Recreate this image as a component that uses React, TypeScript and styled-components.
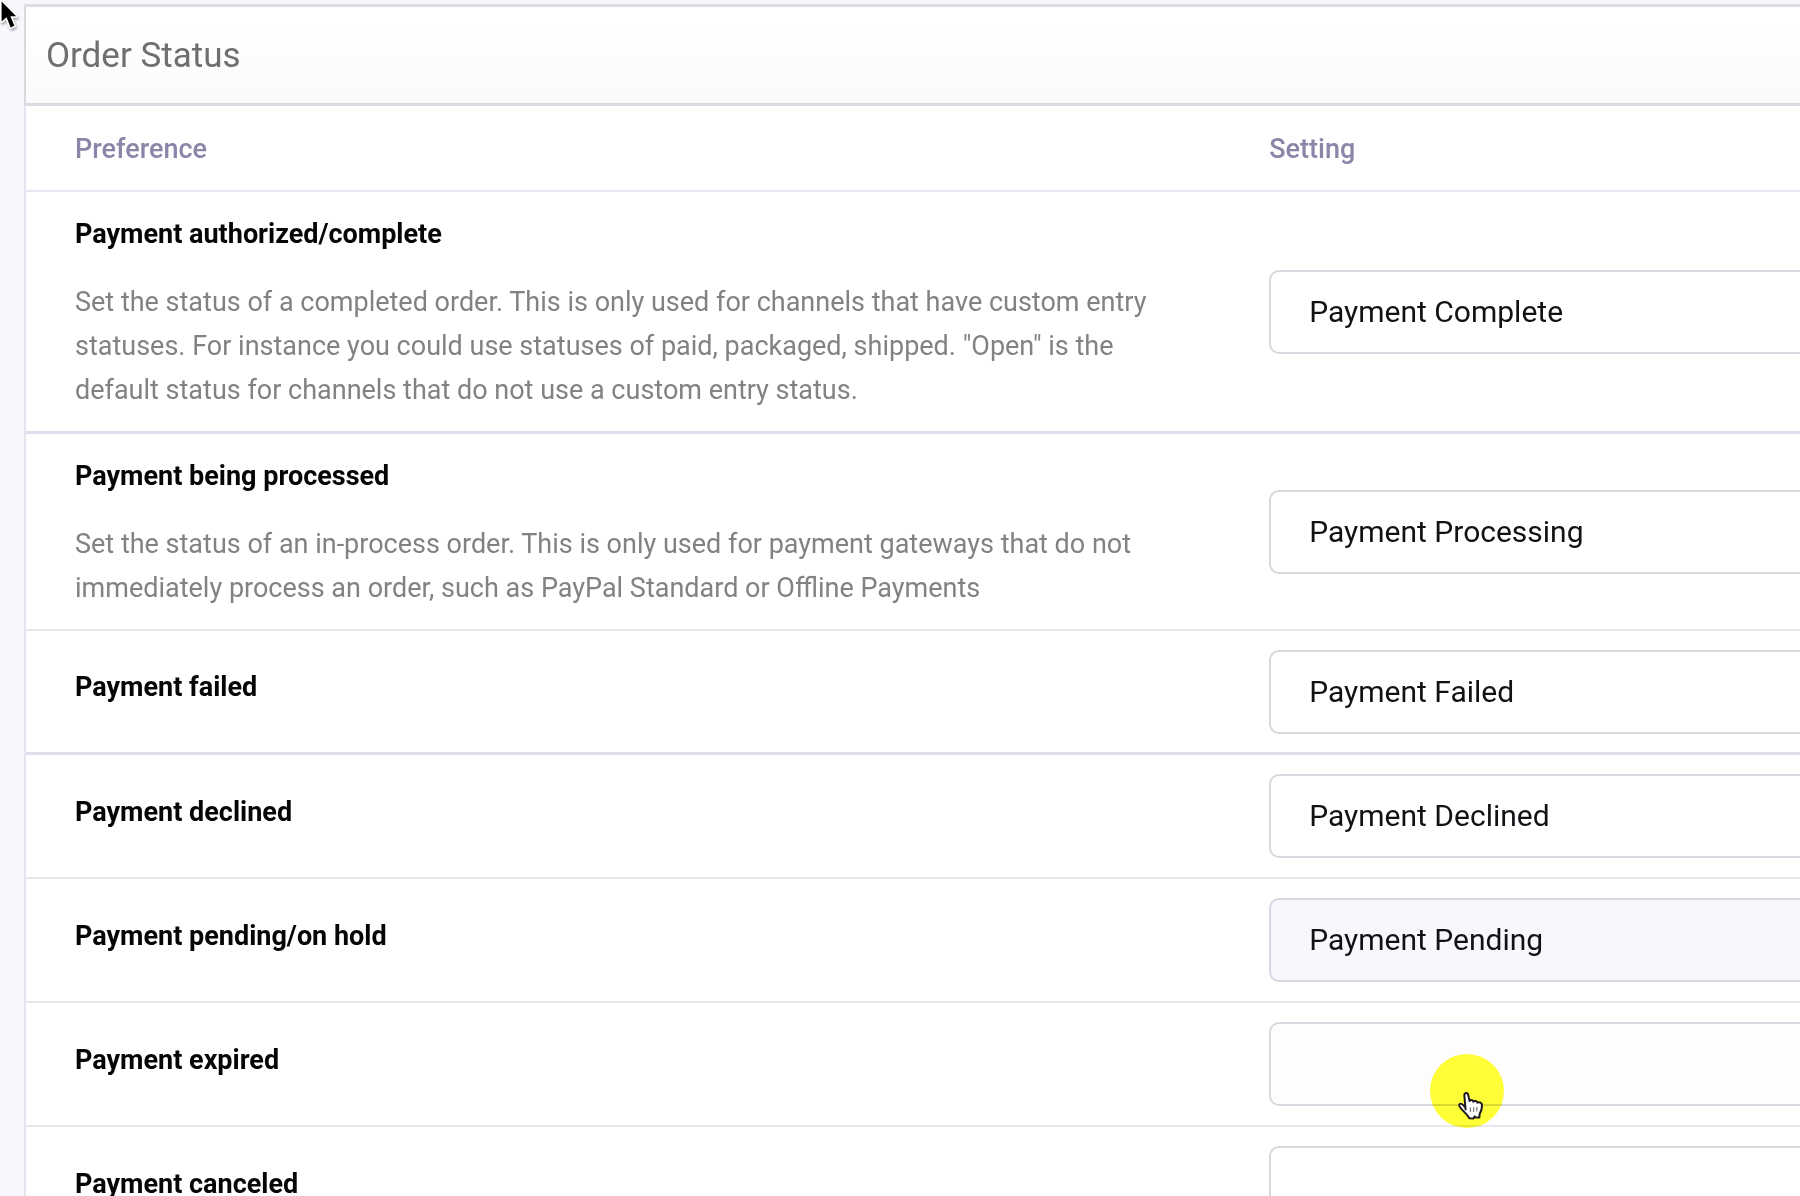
import React, { useState } from "react";
import styled, { createGlobalStyle } from "styled-components";

const GlobalStyle = createGlobalStyle`
  *, *::before, *::after { box-sizing: border-box; }
  body {
    margin: 0;
    background: #f8f7fe;
    color: #060609;
    font-family: Roboto, "Liberation Sans", sans-serif;
  }
`;

const Page = styled.main`
  position: relative;
  height: 100vh;
  overflow: hidden;
  padding: 4px 0 0 24px;
`;

const Panel = styled.section`
  margin-right: -94px;
  border: 2px solid #e6e4ee;
  border-top: 3px solid #dddce2;
  background: #fff;
`;

const PanelHeader = styled.header`
  display: flex;
  align-items: center;
  padding: 25px 20px 23px;
  margin-left: -2px;
  border-left: 2px solid #d9d8de;
  border-bottom: 3px solid #dcdbe3;
  background: linear-gradient(#fff 20%, #fafafa);
`;

const Title = styled.h1`
  margin: 0;
  font-size: 35px;
  font-weight: 400;
  line-height: 48px;
  color: #6f6f70;
`;

const Table = styled.table`
  width: 100%;
  table-layout: fixed;
  border-collapse: separate;
  border-spacing: 0;
`;

const PreferenceColumn = styled.col`
  width: 64%;
`;

const HeadCell = styled.th`
  padding: 21px 49px 19px;
  border-bottom: 2px solid #e8e6f0;
  text-align: left;
  font-size: 27px;
  font-weight: 500;
  line-height: 44px;
  color: #8b86a8;
`;

const Row = styled.tr<{ $strong?: boolean }>`
  > * {
    height: 124px;
    border-bottom: ${(p) => (p.$strong ? "3px solid #e0deec" : "2px solid #e8e7f0")};
    text-align: left;
    vertical-align: middle;
  }
`;

const PreferenceCell = styled.th`
  padding: 20px 49px 19px;
  font-weight: 400;
`;

const Name = styled.label`
  display: block;
  margin-bottom: 10px;
  font-size: 27px;
  font-weight: 700;
  line-height: 44px;
`;

const Description = styled.p`
  margin: 24px 0 0;
  font-size: 27px;
  line-height: 44px;
  color: #828284;
`;

const SettingCell = styled.td`
  padding: 18px 49px;
`;

const Select = styled.select<{ $tint?: string }>`
  display: block;
  appearance: none;
  width: 100%;
  height: 84px;
  padding: 0 38px;
  border: 2px solid #d9d8e0;
  border-radius: 10px;
  background: ${(p) => p.$tint ?? "#fff"};
  font: 400 30px/36px Roboto, "Liberation Sans", sans-serif;
  color: #111116;
  outline: none;
`;

const ClickHighlight = styled.div`
  position: absolute;
  left: 1430px;
  top: 1054px;
  width: 74px;
  height: 74px;
  border-radius: 50%;
  background: #ffff38;
  mix-blend-mode: multiply;
  pointer-events: none;
`;

const HandPointer = styled.svg`
  position: absolute;
  left: 1457px;
  top: 1091px;
  pointer-events: none;
`;

const ArrowPointer = styled.svg`
  position: absolute;
  left: 0;
  top: 0;
  pointer-events: none;
  filter: drop-shadow(1px 2px 1px rgba(0, 0, 0, 0.3));
`;

type Preference = {
  id: string;
  name: string;
  description?: string;
  value: string;
  strong?: boolean;
  tint?: string;
};

const statuses = [
  "",
  "Payment Complete",
  "Payment Processing",
  "Payment Failed",
  "Payment Declined",
  "Payment Pending",
];

const preferences: Preference[] = [
  {
    id: "complete",
    name: "Payment authorized/complete",
    description:
      'Set the status of a completed order. This is only used for channels that have custom entry statuses. For instance you could use statuses of paid, packaged, shipped. "Open" is the default status for channels that do not use a custom entry status.',
    value: "Payment Complete",
    strong: true,
  },
  {
    id: "processing",
    name: "Payment being processed",
    description:
      "Set the status of an in-process order. This is only used for payment gateways that do not immediately process an order, such as PayPal Standard or Offline Payments",
    value: "Payment Processing",
  },
  { id: "failed", name: "Payment failed", value: "Payment Failed", strong: true },
  { id: "declined", name: "Payment declined", value: "Payment Declined" },
  { id: "pending", name: "Payment pending/on hold", value: "Payment Pending", tint: "#f8f7fd" },
  { id: "expired", name: "Payment expired", value: "", tint: "#fefdfe" },
  { id: "canceled", name: "Payment canceled", value: "" },
];

function PreferenceRow({ item }: { item: Preference }) {
  const [value, setValue] = useState(item.value);
  return (
    <Row $strong={item.strong}>
      <PreferenceCell scope="row">
        <Name htmlFor={item.id}>{item.name}</Name>
        {item.description && <Description>{item.description}</Description>}
      </PreferenceCell>
      <SettingCell>
        <Select
          id={item.id}
          $tint={item.tint}
          value={value}
          onChange={(e) => setValue(e.target.value)}
        >
          {statuses.map((s) => (
            <option key={s} value={s}>
              {s}
            </option>
          ))}
        </Select>
      </SettingCell>
    </Row>
  );
}

export default function App() {
  return (
    <>
      <GlobalStyle />
      <Page>
        <Panel>
          <PanelHeader>
            <Title>Order Status</Title>
          </PanelHeader>
          <Table>
            <colgroup>
              <PreferenceColumn />
              <col />
            </colgroup>
            <thead>
              <tr>
                <HeadCell scope="col">Preference</HeadCell>
                <HeadCell scope="col">Setting</HeadCell>
              </tr>
            </thead>
            <tbody>
              {preferences.map((item) => (
                <PreferenceRow key={item.id} item={item} />
              ))}
            </tbody>
          </Table>
        </Panel>
        <ClickHighlight />
        <HandPointer width="28" height="30" viewBox="0 0 28 30" aria-hidden="true">
          <path
            d="M8.6 18.5 L7.4 5.2 C7 1.2 10.8 1 11.4 4.6 L12.6 10 C13.6 8.6 15.8 8.8 16.4 10.6 C17.6 9.4 19.8 9.8 20.4 11.6 C22.4 10.6 25 11.8 25 14.2 C25.2 18 24 20.6 22.6 23.2 L22.4 26.4 L18.6 26.6 L17.6 25.4 L16.4 27.4 L12.4 27.2 C11 24.6 8 21.6 5 18.6 C2 15.4 1.6 13.6 3 12.8 C4.8 11.8 6.6 14.4 8.4 16.4 Z"
            fill="#fff"
            stroke="#1d1a22"
            strokeWidth="2"
            strokeLinejoin="round"
          />
          <path d="M13.4 16.4v4.6M16.6 16.2v4.8M19.8 16v4.6" stroke="#777" strokeWidth="1.2" />
        </HandPointer>
        <ArrowPointer width="22" height="32" viewBox="0 0 22 32" aria-hidden="true">
          <path
            d="M1.6 1.4 V21.6 L6.6 17.2 L10.6 27.4 L14.4 25.8 L10.4 16.2 H16.2 Z"
            fill="#000"
            stroke="#fff"
            strokeWidth="3"
            strokeLinejoin="round"
            paintOrder="stroke"
          />
        </ArrowPointer>
      </Page>
    </>
  );
}
